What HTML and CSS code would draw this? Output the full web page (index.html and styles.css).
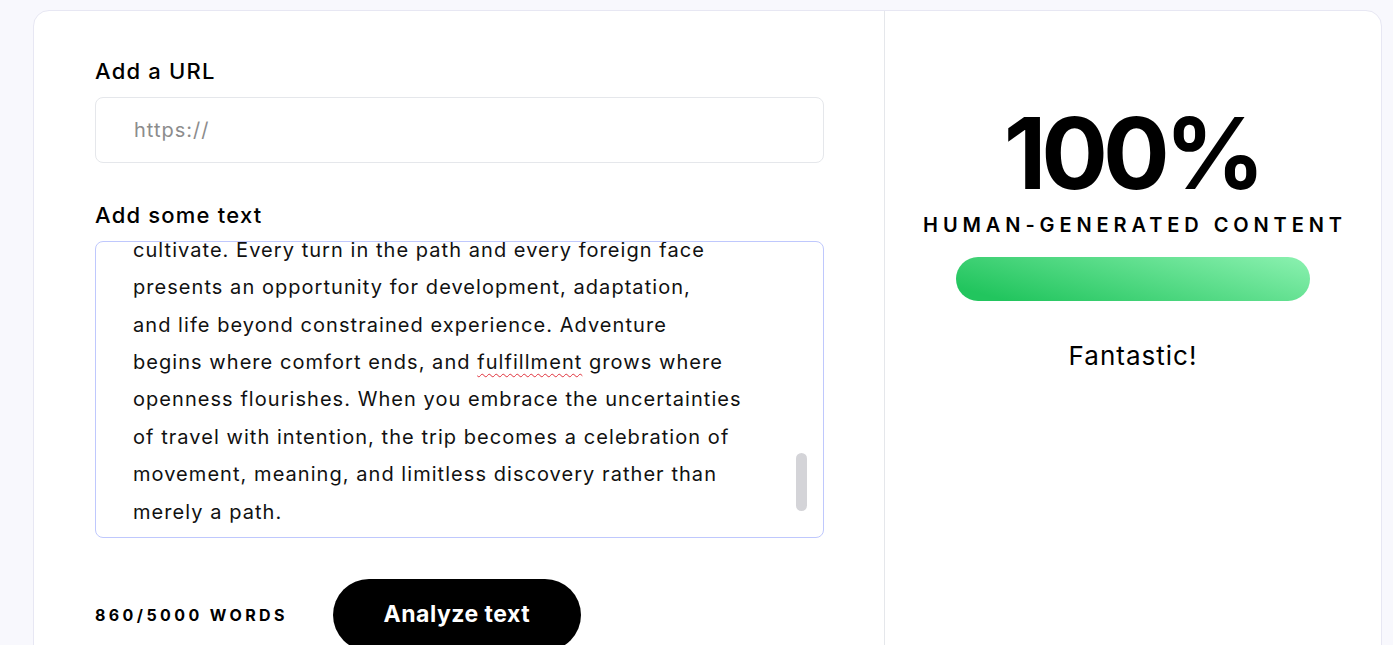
FILE: index.html
```html
<!DOCTYPE html>
<html lang="en">
<head>
<meta charset="utf-8">
<title>AI Content Detector</title>
<link rel="stylesheet" href="styles.css">
</head>
<body>
<div class="page">
  <div class="card">
    <section class="left">
      <label class="label">Add a URL</label>
      <div class="input">https://</div>
      <label class="label label-text">Add some text</label>
      <div class="textarea">
        <div class="text">cultivate. Every turn in the path and every foreign face
presents an opportunity for development, adaptation,
and life beyond constrained experience. Adventure
begins where comfort ends, and <span class="spell">fulfillment</span> grows where
openness flourishes. When you embrace the uncertainties
of travel with intention, the trip becomes a celebration of
movement, meaning, and limitless discovery rather than
merely a path.</div>
        <div class="thumb"></div>
      </div>
      <div class="actions">
        <span class="count">860/5000 WORDS</span>
        <button class="btn">Analyze text</button>
      </div>
    </section>
    <section class="right">
      <div class="score">100%</div>
      <div class="kind">HUMAN-GENERATED CONTENT</div>
      <div class="bar"></div>
      <div class="verdict">Fantastic!</div>
    </section>
  </div>
</div>
</body>
</html>
```

FILE: styles.css
```css
* { box-sizing: border-box; }
html, body { margin: 0; height: 100%; overflow: hidden; }
body {
  background: #f8f8fd;
  font-family: Inter, "Open Sans", sans-serif;
  color: #000;
}
.page { padding: 10px 11px 0 33px; }
.card {
  display: flex;
  height: 700px;
  background: #fff;
  border: 1px solid #e7e7f3;
  border-radius: 16px;
}
.left {
  width: 850px;
  flex: none;
  padding: 45px 60px 0 61px;
  display: flex;
  flex-direction: column;
}
.label {
  font-size: 22px;
  font-weight: 500;
  line-height: 30px;
  letter-spacing: 1.2px;
}
.input {
  margin-top: 11px;
  height: 66px;
  border: 1px solid #e5e7eb;
  border-radius: 8px;
  padding-left: 38px;
  display: flex;
  align-items: center;
  font-size: 20px;
  letter-spacing: 1px;
  color: #8c8c8c;
}
.label-text { margin-top: 37px; }
.textarea {
  position: relative;
  margin-top: 11px;
  height: 297px;
  border: 1px solid #bfc8fd;
  border-radius: 8px;
  overflow: hidden;
  display: flex;
  flex-direction: column;
  justify-content: flex-end;
  padding: 0 0 6px 37px;
}
.text {
  white-space: pre-line;
  font-size: 20px;
  line-height: 37.4px;
  letter-spacing: 1.05px;
  color: #111;
}
.spell {
  text-decoration: underline wavy #e0323c;
  text-decoration-thickness: 1px;
  text-underline-offset: 4px;
}
.thumb {
  position: absolute;
  right: 16px;
  top: 211px;
  width: 11px;
  height: 58px;
  border-radius: 6px;
  background: #d4d4d8;
}
.actions {
  margin-top: 41px;
  display: flex;
  align-items: center;
  gap: 45px;
}
.count {
  font-size: 16px;
  font-weight: 700;
  letter-spacing: 3.4px;
}
.btn {
  width: 248px;
  height: 72px;
  border: none;
  border-radius: 36px;
  background: #000;
  color: #fff;
  font-family: inherit;
  font-size: 23px;
  font-weight: 700;
  letter-spacing: 0.5px;
  padding: 0 0 2px;
}
.right {
  flex: 1;
  border-left: 1px solid #e5e7eb;
  display: flex;
  flex-direction: column;
  align-items: center;
  padding-top: 82px;
}
.score {
  font-size: 99px;
  font-weight: 700;
  line-height: 120px;
  letter-spacing: -5px;
  padding-right: 2px;
}
.kind {
  margin-top: -2px;
  font-size: 20px;
  font-weight: 600;
  letter-spacing: 4.9px;
  line-height: 28px;
  padding-left: 4px;
}
.bar {
  margin-top: 18px;
  width: 354px;
  height: 44px;
  border-radius: 22px;
  background: linear-gradient(15deg, #22c55e 10%, #86efac 95%);
}
.verdict {
  margin-top: 38px;
  font-size: 26px;
  line-height: 34px;
  font-weight: 400;
  letter-spacing: 1px;
}
```
